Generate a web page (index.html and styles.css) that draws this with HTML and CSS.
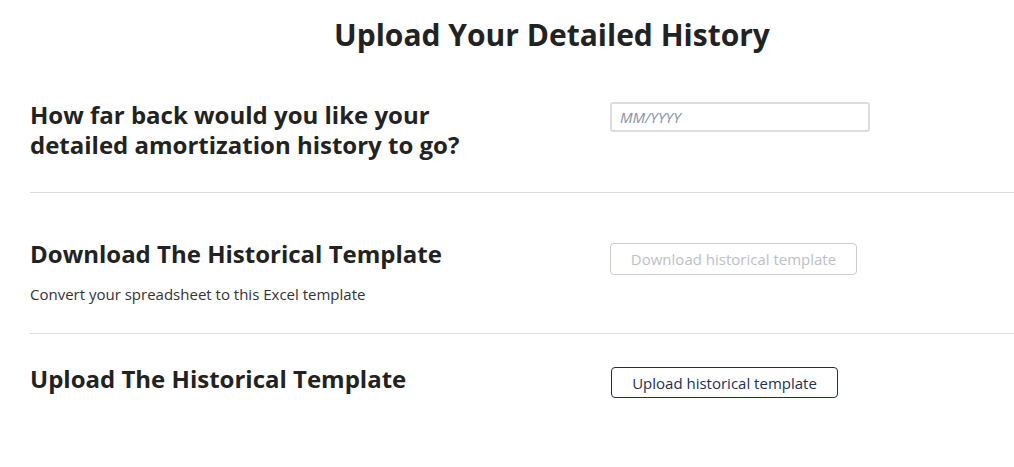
FILE: index.html
```html
<!DOCTYPE html>
<html>
<head>
<meta charset="utf-8">
<link rel="stylesheet" href="styles.css">
</head>
<body>
<div class="page">
  <h1 class="title">Upload Your Detailed History</h1>
  <section class="row row-first">
    <div class="left">
      <h2 class="heading">How far back would you like your detailed amortization history to go?</h2>
    </div>
    <div class="right">
      <input class="date-input" type="text" placeholder="MM/YYYY">
    </div>
  </section>
  <section class="row row-second">
    <div class="left">
      <h2 class="heading">Download The Historical Template</h2>
      <p class="sub">Convert your spreadsheet to this Excel template</p>
    </div>
    <div class="right">
      <button class="btn btn-disabled" disabled>Download historical template</button>
    </div>
  </section>
  <section class="row row-third">
    <div class="left">
      <h2 class="heading">Upload The Historical Template</h2>
    </div>
    <div class="right">
      <button class="btn btn-outline">Upload historical template</button>
    </div>
  </section>
</div>
</body>
</html>
```
FILE: styles.css
```css
* { box-sizing: border-box; }
html, body { margin: 0; padding: 0; background: #fff; }
body {
  font-family: "Open Sans", "Liberation Sans", sans-serif;
  color: #222;
  overflow: hidden;
}
.page {
  padding-left: 30px;
}
.title {
  margin: 0;
  padding-top: 14px;
  font-size: 30px;
  font-weight: 700;
  line-height: 42px;
  text-align: center;
  padding-left: 60px;
  color: #222;
}
.row {
  display: grid;
  grid-template-columns: 580px 1fr;
  border-bottom: 1px solid #dcdcdc;
}
.row-first { padding-top: 46px; height: 137px; }
.row-first .heading { margin-top: -2px; }
.row-second { padding-top: 46px; height: 141px; }
.row-second .btn { margin-top: 4px; }
.row-third { padding-top: 31px; border-bottom: none; }
.row-third .heading { margin-top: -1px; }
.row-third .btn { margin-top: 2px; }
.heading {
  margin: 0;
  font-size: 24px;
  font-weight: 700;
  line-height: 30px;
  color: #222;
  max-width: 440px;
}
.sub {
  margin: 15px 0 0;
  font-size: 15px;
  line-height: 20px;
  color: #333;
}
.date-input {
  display: block;
  width: 260px;
  height: 30px;
  border: 2px solid #ddd;
  border-radius: 3px;
  padding: 0 8px;
  font-family: "Open Sans", sans-serif;
  font-size: 15px;
  font-style: italic;
}
.date-input::placeholder { color: #8a93a8; }
.btn {
  display: block;
  font-family: "Open Sans", sans-serif;
  font-size: 15px;
  height: 31px;
  border-radius: 4px;
  background: #fff;
  padding: 0;
}
.btn-disabled {
  border: 1px solid #c8ccd4;
  color: #bcc0c8;
  width: 247px;
  height: 32px;
}
.btn-outline {
  border: 1px solid #1d2f55;
  color: #1d2f55;
  width: 227px;
  margin-left: 1px;
}
```
